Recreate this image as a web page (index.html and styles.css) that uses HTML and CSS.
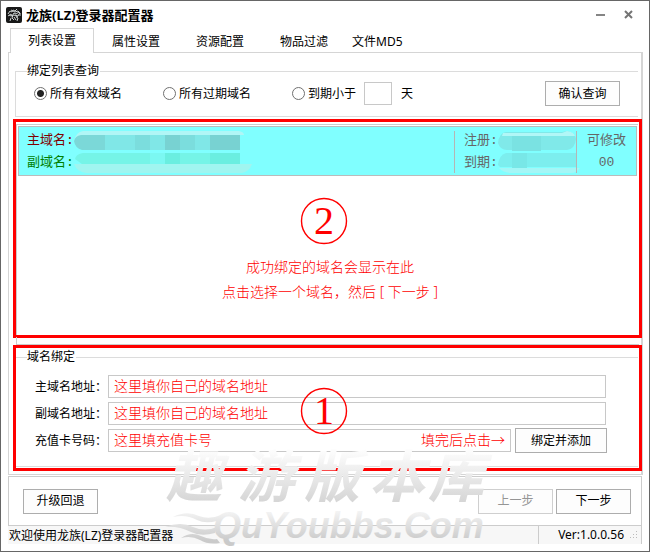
FILE: index.html
```html
<!DOCTYPE html>
<html lang="zh-CN">
<head>
<meta charset="utf-8">
<title>龙族(LZ)登录器配置器</title>
<link rel="stylesheet" href="styles.css">
</head>
<body>
<div class="window">
  <header class="titlebar">
    <svg class="app-icon" width="16" height="16" viewBox="0 0 16 16" aria-hidden="true">
      <rect width="16" height="16" rx="2" fill="#181818"/>
      <g fill="none" stroke="#c9cfcf" stroke-width="1">
        <path d="M2 7l2-3 2 1 1-2 2 1 2-2M2 9l3-2 1 2 2-3 2 1 3-2M5 11l-1 3M7 8l-1 3 2 2M9 8l3 1 1-2M10 10l2 1-1 3M12 4l2 2v3M8 10l2 3M5 3l4 2 3-1 2 3M3 8l2 1 3-1 4 2"/>
      </g>
    </svg>
    <h1 class="title">龙族(LZ)登录器配置器</h1>
    <button class="win-btn" type="button" aria-label="最小化"><svg width="9" height="9" viewBox="0 0 9 9"><path d="M0 5h9" stroke="#858585" stroke-width="2"/></svg></button>
    <button class="win-btn" type="button" aria-label="关闭"><svg width="9" height="9" viewBox="0 0 9 9"><path d="M1 1l7 7M8 1l-7 7" stroke="#747474" stroke-width="2"/></svg></button>
  </header>

  <nav class="tabs" role="tablist">
    <button class="tab active" type="button" role="tab" aria-selected="true">列表设置</button>
    <button class="tab" type="button" role="tab">属性设置</button>
    <button class="tab" type="button" role="tab">资源配置</button>
    <button class="tab" type="button" role="tab">物品过滤</button>
    <button class="tab compact" type="button" role="tab">文件MD5</button>
  </nav>

  <main class="panel">
    <fieldset class="group query">
      <legend>绑定列表查询</legend>
      <div class="query-row">
        <label class="choice"><input type="radio" name="scope" checked>所有有效域名</label>
        <label class="choice"><input type="radio" name="scope">所有过期域名</label>
        <label class="choice short"><input type="radio" name="scope">到期小于</label>
        <label class="days"><input class="box" type="text" aria-label="到期天数">天</label>
        <button class="btn confirm" type="button">确认查询</button>
      </div>
    </fieldset>

    <section class="mark list-mark">
      <div class="list">
        <div class="record">
          <div class="cell">
            <div class="line main">主域名:<svg class="mask" width="178" height="20" viewBox="0 0 178 20"><path d="M0 10Q2 1 9 0H165q5 1 5 4H8z" fill="#b0f6f6"/><path d="M0 10Q1 5 7 4H31V19H8Q1 17 0 10z" fill="#7bd8d8"/><path d="M31 4h30v15H31zM76 4h15v15H76zM121 4h15v15h-15z" fill="#80e7e7"/><path d="M61 4h15v15H61zM106 4h15v15h-15z" fill="#7bdddd"/><path d="M91 4h15v15H91zM136 4h30v15h-30z" fill="#78d2d2"/></svg></div>
            <div class="line sub">副域名:<svg class="mask" width="178" height="20" viewBox="0 0 178 20"><path d="M1 6Q2 1 9 0H166v11H8z" fill="#75f4e7"/><path d="M91 0h15v11H91zM136 0h30v11h-30z" fill="#6aeee0"/><path d="M76 0h15v11H76z" fill="#7bf8f2"/><path d="M0 11h178q-3 8-10 9H12Q3 19 0 11z" fill="#a0f5f0"/></svg></div>
          </div>
          <div class="cell dates">
            <div class="line">注册:<svg class="mask" width="78" height="20" viewBox="0 0 78 20"><path d="M0 12Q1 2 8 1H64l5-1q8 1 9 8-1 10-9 11H9Q2 19 0 12z" fill="#80e9e9"/><path d="M5 2H64l5-2q7 1 8 5H4z" fill="#b1f7f7"/><path d="M14 5h15v15H14zM29 5h14v15H29z" fill="#7ae2e2"/></svg></div>
            <div class="line">到期:<svg class="mask" width="82" height="20" viewBox="0 0 82 20"><path d="M0 12Q1 2 8 0H78v14H2z" fill="#7ceeee"/><path d="M14 0h15v15H14z" fill="#78e7e7"/><path d="M1 15H82q-4 5-9 5H12Q4 19 1 15z" fill="#a5f6f6"/></svg></div>
          </div>
          <div class="cell state">
            <div class="line">可修改</div>
            <div class="line">00</div>
          </div>
        </div>
        <div class="guide">
          <svg class="step" width="48" height="48" viewBox="0 0 48 48"><circle cx="24" cy="24" r="22.5"/><text x="24" y="37">2</text></svg>
          <p>成功绑定的域名会显示在此</p>
          <p>点击选择一个域名，然后 [ 下一步 ]</p>
        </div>
      </div>
    </section>

    <section class="mark bind-mark">
      <fieldset class="group bind">
        <legend>域名绑定</legend>
        <div class="form">
          <label for="main-domain">主域名地址：</label>
          <input class="box wide" id="main-domain" type="text" value="这里填你自己的域名地址">
          <label for="sub-domain">副域名地址：</label>
          <input class="box wide" id="sub-domain" type="text" value="这里填你自己的域名地址">
          <label for="card">充值卡号码：</label>
          <div class="box card-field">
            <input id="card" type="text" value="这里填充值卡号">
            <span>填完后点击→</span>
          </div>
          <button class="btn" type="button">绑定并添加</button>
        </div>
      </fieldset>
      <svg class="step over" width="48" height="48" viewBox="0 0 48 48"><circle cx="24" cy="24" r="22.5"/><text x="24" y="37">1</text></svg>
    </section>
  </main>

  <footer class="actions">
    <button class="btn" type="button">升级回退</button>
    <button class="btn prev" type="button" disabled>上一步</button>
    <button class="btn" type="button">下一步</button>
  </footer>
  <div class="status">
    <span>欢迎使用龙族(LZ)登录器配置器</span>
    <span class="version">Ver:1.0.0.56
      <svg width="9" height="9" viewBox="0 0 9 9" fill="#bbb" aria-hidden="true"><path d="M7 0h1v1H7zM4 3h1v1H4zM7 3h1v1H7zM1 6h1v1H1zM4 6h1v1H4zM7 6h1v1H7z"/></svg>
    </span>
  </div>

  <div class="watermark">
    <svg width="340" height="104" viewBox="0 0 340 104">
      <defs>
        <linearGradient id="fade-top" gradientUnits="userSpaceOnUse" x1="0" y1="5" x2="0" y2="62"><stop offset="0" stop-color="#fcfcfc"/><stop offset="1" stop-color="#d0d0d0"/></linearGradient>
        <linearGradient id="fade-low" gradientUnits="userSpaceOnUse" x1="0" y1="62" x2="0" y2="94"><stop offset="0" stop-color="#f7f7f7"/><stop offset="1" stop-color="#cacaca"/></linearGradient>
      </defs>
      <text class="brush" x="3 75 141 206 265" y="50" fill="url(#fade-top)">趣游版本库</text>
      <path d="M10 70q14-7 26-1 10 4 22-1l-4 6q-12 3-20-1-11-6-24-3zM2 80q16-6 28 0 12 5 24 0l-2 6q-14 4-24-1-12-6-26-5zM18 91q10-7 20-2 8 4 16 3l3 4q-12 2-20-3-9-5-19-2z" fill="url(#fade-low)"/>
      <text class="site" x="50" y="91" fill="url(#fade-low)">QuYoubbs.Com</text>
    </svg>
  </div>
</div>
</body>
</html>
```

FILE: styles.css
```css
* { box-sizing: border-box; }

body {
  margin: 0;
  background: #fff;
  color: #000;
  font: 12px/16px "Noto Sans", "Noto Sans CJK SC", sans-serif;
}

button, input { font: inherit; color: inherit; margin: 0; }

.window {
  position: relative;
  display: flex;
  flex-direction: column;
  min-height: 100vh;
  padding: 0 6px 7px 7px;
  border: 1px solid #666;
}

.titlebar {
  display: flex;
  align-items: center;
  height: 27px;
  padding-right: 1px;
}

.app-icon { margin: 0 4px 0 -2px; }

.title {
  flex: 1;
  margin: 0;
  font-size: 13px;
  line-height: 20px;
}

.win-btn {
  display: flex;
  align-items: center;
  justify-content: center;
  width: 28px;
  height: 20px;
  padding: 0;
  border: 0;
  background: none;
}

.tabs {
  display: flex;
  padding-left: 2px;
  z-index: 1;
}

.tab {
  height: 25px;
  padding: 2px 18px 0;
  border: 0;
  background: none;
}

.tab.active {
  margin-bottom: -1px;
  padding: 0 17px;
  border: 1px solid #d5d5d5;
  border-bottom: 0;
  background: #fff;
}

.tab.compact { padding: 2px 6px 0; }

.panel {
  flex: 1;
  display: flex;
  flex-direction: column;
  border: 1px solid #d5d5d5;
  border-right-width: 2px;
  margin-top: -1px;
  padding: 10px 0 3px 4px;
}

.group {
  min-width: 0;
  margin: 0;
  padding: 0;
  border: 1px solid #dcdcdc;
  border-right: 0;
}

.group legend {
  margin-left: 11px;
  padding: 0 1px 0 0;
}

.query { margin: 0 3px 2px 2px; }

.query-row {
  display: flex;
  align-items: center;
  height: 37px;
  padding: 0 18px 8px;
}

.choice {
  display: flex;
  align-items: center;
  gap: 3px;
  width: 129px;
}

.choice.short { width: 72px; }

.choice input {
  appearance: none;
  width: 13px;
  height: 13px;
  border: 1px solid #707070;
  border-radius: 50%;
  background: #fff;
}

.choice input:checked { background: radial-gradient(circle, #222 3px, #fff 4px); }

.days { display: flex; align-items: center; gap: 9px; }

.days .box { width: 28px; }

.box {
  width: 100%;
  height: 23px;
  padding: 0 5px;
  border: 1px solid #c8c8c8;
  background: #fff;
  color: red;
  font-size: 14px;
  font-weight: 300;
}

.btn {
  min-width: 75px;
  height: 25px;
  padding: 0 8px;
  border: 1px solid #adadad;
  background: #fdfdfd;
}

.btn:disabled { color: #959595; border-color: #cfcfcf; }

.confirm { margin-left: auto; }

.mark {
  position: relative;
  margin-right: -1px;
  border: 3px solid red;
}

.list-mark {
  flex: 1;
  display: flex;
  padding: 2px 1px 0 0;
}

.list-mark::after {
  content: "";
  position: absolute;
  inset: auto 0 -10px 0;
  height: 7px;
  border: solid #ccc;
  border-width: 0 0 1px 1px;
}

.list {
  flex: 1;
  padding: 1px;
  border: 1px solid #ccc;
  border-width: 1px 0 0 1px;
}

.record {
  display: grid;
  grid-template-columns: 1fr 122px 60px;
  padding: 4px 0 2px;
  border: 1px solid #bbb;
  background: #80ffff;
}

.cell {
  display: grid;
  gap: 2px;
  padding-left: 8px;
  color: #666;
  font: 13px/20px "Liberation Mono", "Noto Sans CJK SC", monospace;
}

.cell + .cell { border-left: 1px solid #b5b5b5; }

.dates { padding-left: 9px; }

.state { padding-left: 0; text-align: center; }

.line { display: flex; white-space: nowrap; }

.state .line { justify-content: center; }

.line.main { color: #800000; }

.line.sub { color: #008000; }

.mask { flex: none; }

.guide {
  padding-top: 21px;
  color: red;
  font-size: 14px;
  font-weight: 300;
  line-height: 25px;
  text-align: center;
}

.guide p { margin: 0; padding-left: 5px; }

.guide .step { margin: 0 8px 9px 0; vertical-align: top; }

.step circle { fill: none; stroke: red; stroke-width: 1.4; }

.step text {
  fill: red;
  font: 40px "Liberation Serif", serif;
  text-anchor: middle;
}

.over {
  position: absolute;
  top: 39px;
  left: calc(50% - 28px);
}

.bind-mark { margin-top: 7px; padding: 1px 1px 1px 0; }

.bind { border-left: 0; }

.form {
  display: grid;
  grid-template-columns: 73px 1fr 92px;
  align-items: center;
  gap: 2px 0;
  padding: 9px 31px 13px 19px;
}

.form > * { height: 25px; line-height: 25px; }

.form > .wide {
  grid-column: 2 / 4;
  width: calc(100% - 1px);
}

.form > .box { height: 23px; padding-bottom: 2px; }

.form > label { white-space: nowrap; }

.form > .card-field {
  display: flex;
  align-items: center;
  justify-content: space-between;
  width: calc(100% - 4px);
}

.card-field input {
  flex: 1;
  min-width: 0;
  height: 20px;
  padding: 0;
  border: 0;
  background: none;
}

.form .btn { line-height: 16px; }

.actions {
  display: flex;
  align-items: center;
  gap: 3px;
  height: 50px;
  margin: 1px 1px 0 0;
  padding: 0 10px 0 14px;
  border: 1px solid #ccc;
}

.prev { margin-left: auto; }

.status {
  display: flex;
  justify-content: space-between;
  height: 18px;
  margin-right: 1px;
  line-height: 20px;
  padding-left: 1px;
  background: #f7f7f7;
}

.version {
  display: flex;
  align-items: center;
  gap: 5px;
  padding: 0 3px 0 19px;
  border: solid #ccc;
  border-width: 0 1px;
}

.watermark {
  position: absolute;
  left: calc(50% - 162px);
  bottom: 0;
  pointer-events: none;
}

.watermark svg { display: block; }

.brush { font: italic 700 56px "Noto Sans CJK SC", sans-serif; }

.site { font: italic bold 36px "Liberation Sans", sans-serif; }
```
